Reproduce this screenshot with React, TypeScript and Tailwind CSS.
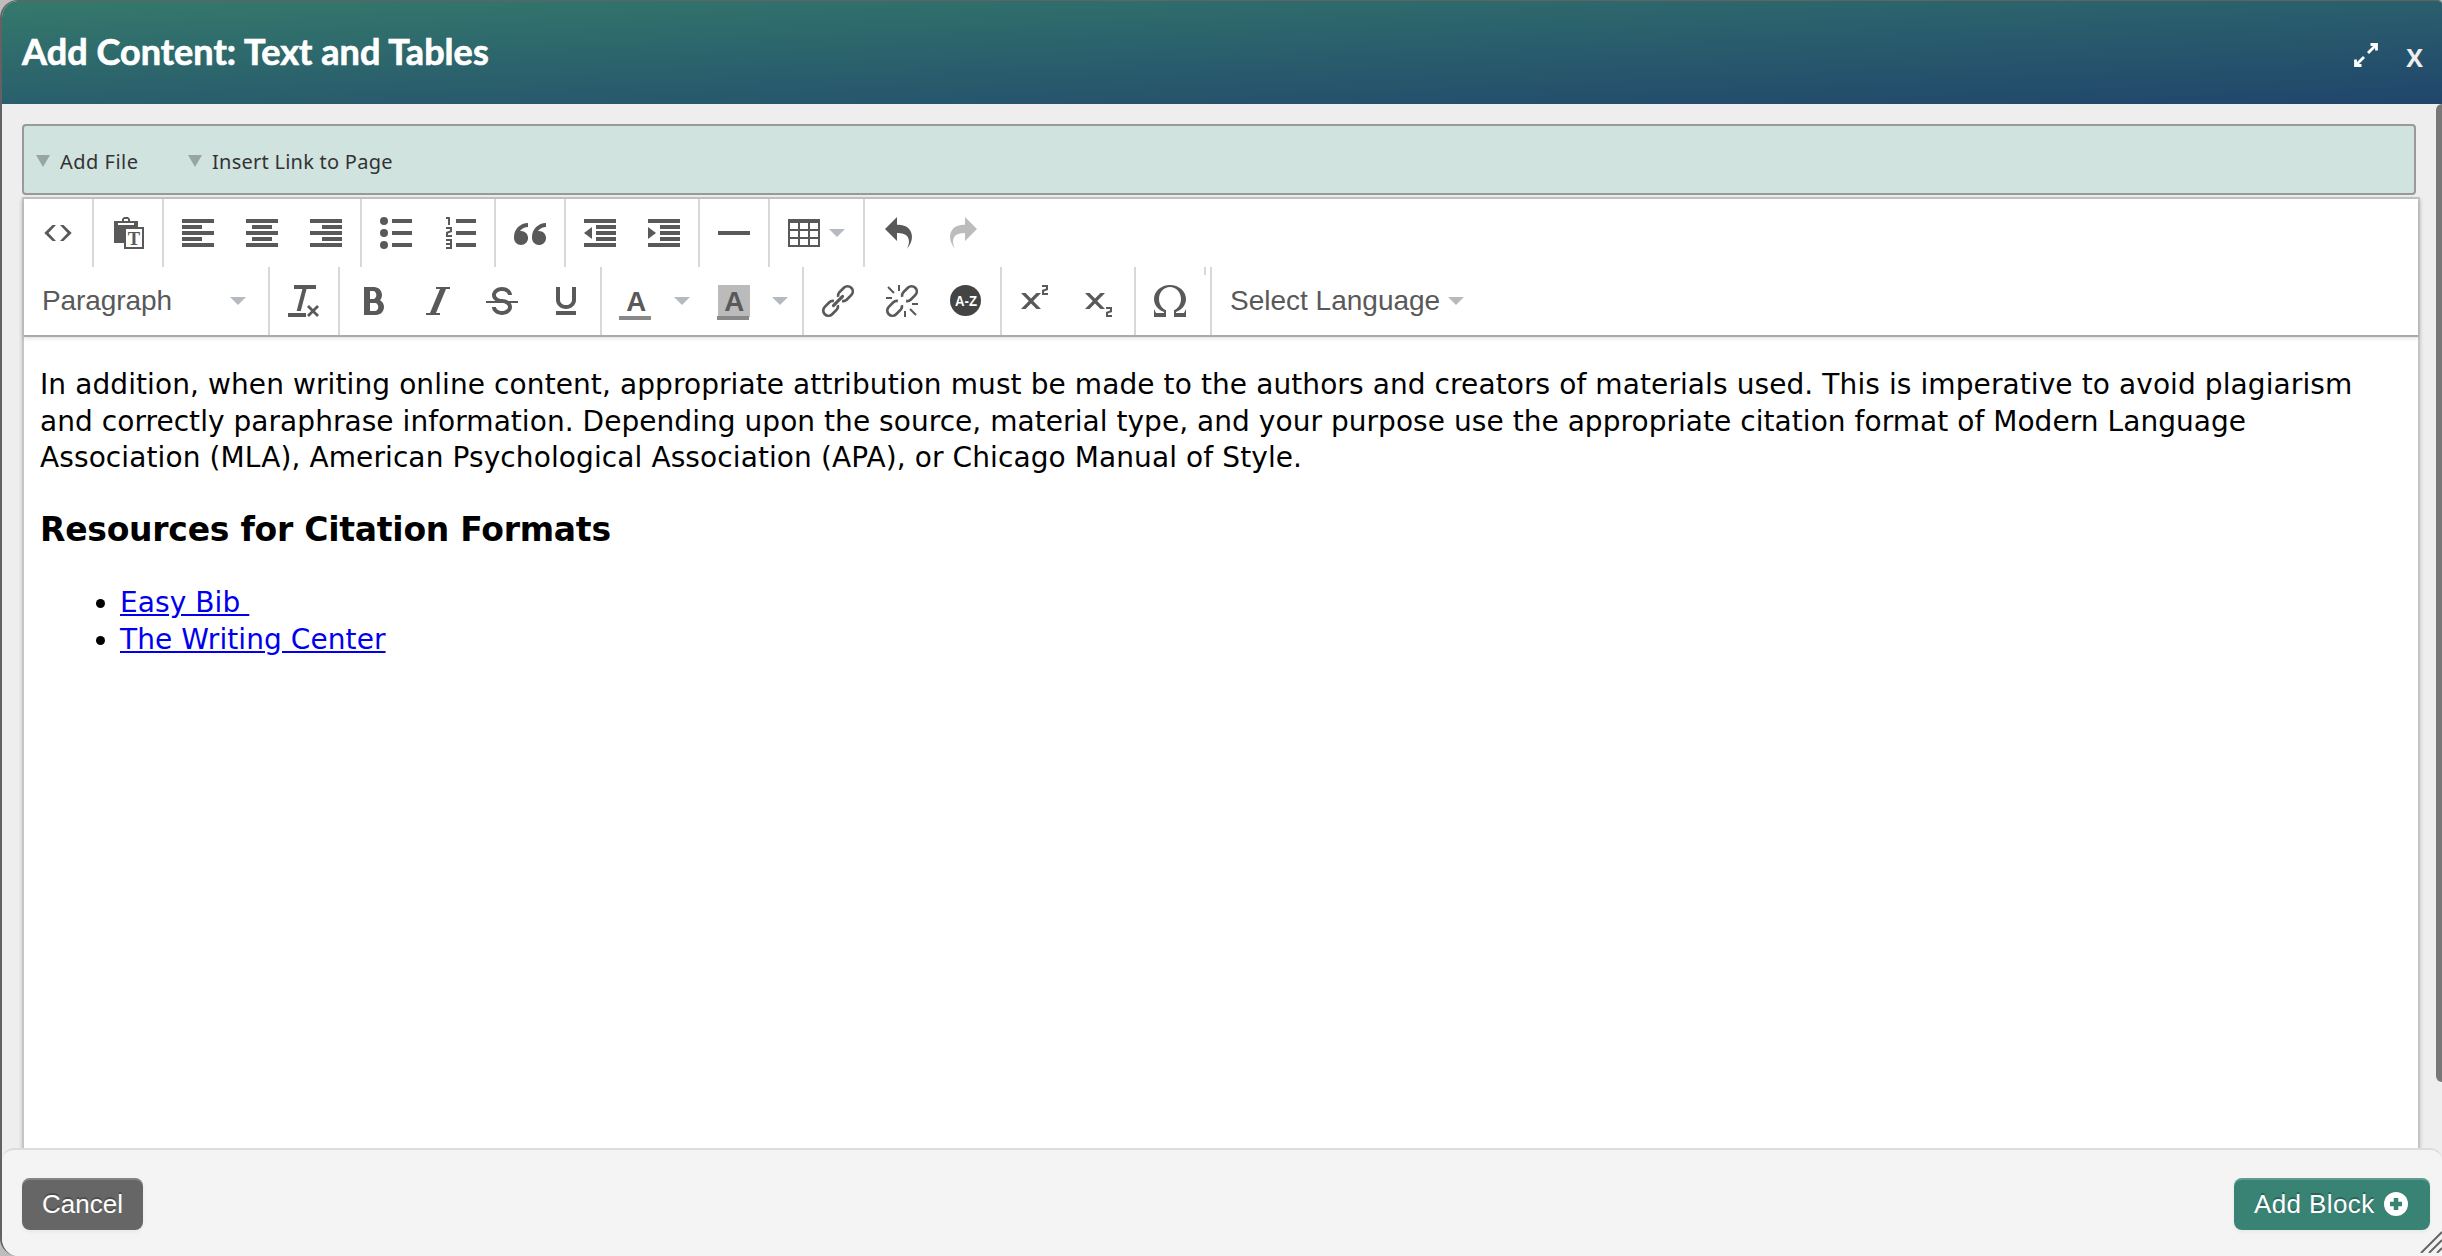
import React from 'react';
import {
  ImBold,
  ImClearFormatting,
  ImItalic,
  ImOmega,
  ImQuotesLeft,
  ImRedo2,
  ImStrikethrough,
  ImUnderline,
  ImUndo2,
} from 'react-icons/im';

interface ChildrenProps {
  children: React.ReactNode;
}

// 32px icon on the toolbar grid
function Icon({ children }: ChildrenProps) {
  return (
    <svg width="32" height="32" viewBox="0 0 32 32" fill="currentColor" className="block overflow-visible">
      {children}
    </svg>
  );
}

function Button({ children }: ChildrenProps) {
  return <button className="flex h-16 w-16 shrink-0 items-center justify-center">{children}</button>;
}

function Group({ children, className = '' }: ChildrenProps & { className?: string }) {
  return (
    <div className={`flex h-[68px] shrink-0 items-center border-r-2 border-[#d8d8d8] px-0.5 ${className}`}>
      {children}
    </div>
  );
}

function Caret() {
  return (
    <svg width="16" height="8" viewBox="0 0 16 8" className="block shrink-0">
      <path d="M0 0h16L8 8z" fill="#b5babf" />
    </svg>
  );
}

const LONG_ROWS = 'M0 2h32v4H0zM0 14h32v4H0zM0 26h32v4H0z';
const LIST_ROWS = 'M12 2h20v4H12zM12 14h20v4H12zM12 26h20v4H12z';
const INDENT_ROWS = 'M0 2h32v4H0zM12 8h20v4H12zM12 14h20v4H12zM12 20h20v4H12zM0 26h32v4H0z';
const DIAGONAL_CROSS = 'M1 8h4.500L11 13.600 16.500 8H21l-7.800 8L21 24h-4.500L11 18.400 5.500 24H1l7.800-8z';
const SMALL_TWO = 'h6v5l-4 1.500v1.500h4v2h-6v-5l4-1.500v-1.500h-4z';

function ChainHalves() {
  return (
    <>
      <path d="M19 13.200A5 5 0 0 1 23 10.800h6.500a5.200 5.200 0 0 1 0 10.400H23a5 5 0 0 1-4-2.400" />
      <path d="M13 13.200A5 5 0 0 0 9 10.800H2.500a5.200 5.200 0 0 0 0 10.400H9a5 5 0 0 0 4-2.400" />
    </>
  );
}

function FirstRow() {
  return (
    <div className="flex h-[68px]">
      <Group>
        <Button>
          <Icon>
            <path d="M10.500 8H14l-7.500 8 7.500 8h-3.500l-8.200-8zM21.500 8H18l7.500 8-7.500 8h3.500l8.200-8z" />
          </Icon>
        </Button>
      </Group>
      <Group>
        <Button>
          <Icon>
            <path d="M2 4h8V2l2-2h4l2 2v2h8v6H12v16H2zM12 2v2h4V2zM6 6v2h16V6z" fillRule="evenodd" />
            <path d="M12 10h20v22H12zM14 12v18h16V12z" fillRule="evenodd" />
            <text
              x="22"
              y="28"
              textAnchor="middle"
              fontSize="18.500"
              fontWeight="bold"
              fontFamily="'Liberation Serif', serif"
            >
              T
            </text>
          </Icon>
        </Button>
      </Group>
      <Group>
        <Button>
          <Icon>
            <path d={LONG_ROWS} />
            <path d="M0 8h20v4H0zM0 20h20v4H0z" />
          </Icon>
        </Button>
        <Button>
          <Icon>
            <path d={LONG_ROWS} />
            <path d="M6 8h20v4H6zM6 20h20v4H6z" />
          </Icon>
        </Button>
        <Button>
          <Icon>
            <path d={LONG_ROWS} />
            <path d="M12 8h20v4H12zM12 20h20v4H12z" />
          </Icon>
        </Button>
      </Group>
      <Group>
        <Button>
          <Icon>
            <circle cx="4" cy="4" r="4" />
            <circle cx="4" cy="16" r="4" />
            <circle cx="4" cy="28" r="4" />
            <path d={LIST_ROWS} />
          </Icon>
        </Button>
        <Button>
          <Icon>
            <path d="M2 0h4v8H4V2H2z" />
            <path d={'M2 10' + SMALL_TWO} />
            <path d="M2 22h6v10H2v-2h4v-2H2v-2h4v-2H2z" />
            <path d={LIST_ROWS} />
          </Icon>
        </Button>
      </Group>
      <Group>
        <Button>
          <ImQuotesLeft size={32} />
        </Button>
      </Group>
      <Group>
        <Button>
          <Icon>
            <path d={INDENT_ROWS} />
            <path d="M8 10v12l-8-6z" />
          </Icon>
        </Button>
        <Button>
          <Icon>
            <path d={INDENT_ROWS} />
            <path d="M0 10v12l8-6z" />
          </Icon>
        </Button>
      </Group>
      <Group>
        <Button>
          <Icon>
            <path d="M0 14h32v4H0z" />
          </Icon>
        </Button>
      </Group>
      <Group className="w-[95px]">
        <button className="flex items-center gap-[9px] pl-4">
          <Icon>
            <path
              fillRule="evenodd"
              d="M0 2h32v28H0zM2 6v6h8V6zM12 6v6h8V6zM22 6v6h8V6zM2 14v6h8v-6zM12 14v6h8v-6zM22 14v6h8v-6zM2 22v6h8v-6zM12 22v6h8v-6zM22 22v6h8v-6z"
            />
          </Icon>
          <Caret />
        </button>
      </Group>
      <div className="flex items-center px-0.5">
        <Button>
          <ImUndo2 size={32} />
        </Button>
        <Button>
          <ImRedo2 size={32} color="#bcbcbc" />
        </Button>
      </div>
    </div>
  );
}

function SecondRow() {
  return (
    <div className="flex h-[68px]">
      <Group className="w-[246px]">
        <button className="flex w-full items-center justify-between pl-4 pr-5">
          <span className="text-[28px] tracking-[-0.1px]">Paragraph</span>
          <Caret />
        </button>
      </Group>
      <Group>
        <Button>
          <ImClearFormatting size={32} />
        </Button>
      </Group>
      <Group>
        <Button>
          <ImBold size={32} />
        </Button>
        <Button>
          <ImItalic size={32} />
        </Button>
        <Button>
          <ImStrikethrough size={32} />
        </Button>
        <Button>
          <ImUnderline size={32} />
        </Button>
      </Group>
      <Group>
        <button className="flex w-[98px] items-center gap-[22px] pl-4">
          <Icon>
            <text
              x="16.300"
              y="26"
              textAnchor="middle"
              fontSize="28"
              fontWeight="bold"
              textLength="20"
              lengthAdjust="spacingAndGlyphs"
            >
              A
            </text>
            <path d="M-1 31h32v4H-1z" fill="#888" />
          </Icon>
          <Caret />
        </button>
        <button className="flex w-[98px] items-center gap-[22px] pl-4">
          <Icon>
            <path d="M0 0h32v32H0z" fill="#bbb" />
            <text
              x="16.300"
              y="26"
              textAnchor="middle"
              fontSize="28"
              fontWeight="bold"
              textLength="20"
              lengthAdjust="spacingAndGlyphs"
            >
              A
            </text>
            <path d="M-1 31h32v4H-1z" fill="#888" />
          </Icon>
          <Caret />
        </button>
      </Group>
      <Group>
        <Button>
          <Icon>
            <g transform="rotate(-45 16 16)" fill="none" stroke="currentColor" strokeWidth="2.700">
              <ChainHalves />
              <path d="M9.500 16h13" strokeWidth="3" strokeLinecap="round" />
            </g>
          </Icon>
        </Button>
        <Button>
          <Icon>
            <g transform="rotate(-45 16 16)" fill="none" stroke="currentColor" strokeWidth="2.700">
              <ChainHalves />
            </g>
            <path
              d="M13 0v6M2 2l6 6M0 13h6M19 32v-6M30 30l-6-6M32 19h-6"
              fill="none"
              stroke="currentColor"
              strokeWidth="2"
            />
          </Icon>
        </Button>
        <Button>
          <Icon>
            <circle cx="15.500" cy="15.500" r="15.500" fill="#444" />
            <text
              x="5"
              y="21"
              fontSize="15"
              fontWeight="bold"
              fill="#fff"
              textLength="22"
              lengthAdjust="spacingAndGlyphs"
            >
              A-Z
            </text>
          </Icon>
        </Button>
      </Group>
      <Group>
        <Button>
          <Icon>
            <path d={DIAGONAL_CROSS} />
            <path d={'M22 0' + SMALL_TWO} />
          </Icon>
        </Button>
        <Button>
          <Icon>
            <path d={DIAGONAL_CROSS} />
            <path d={'M22 22' + SMALL_TWO} />
          </Icon>
        </Button>
      </Group>
      <div className="flex items-center px-0.5">
        <Button>
          <ImOmega size={32} />
        </Button>
      </div>
      {/* empty group, only the stub of its border shows */}
      <div className="h-2 w-0.5 bg-[#d8d8d8]" />
      <div className="w-1.5 border-r-2 border-[#d8d8d8]" />
      <button className="flex items-center gap-2 pl-[18px]">
        <span className="text-[28px]">Select Language</span>
        <Caret />
      </button>
    </div>
  );
}

function DropdownLink({ label, className }: { label: string; className: string }) {
  return (
    <a className={`flex items-center ${className}`}>
      <svg width="14" height="12" viewBox="0 0 14 12" className="mr-[10px] mt-[-3px]">
        <path d="M0 0h14L7 12z" fill="#99a5a1" />
      </svg>
      {label}
    </a>
  );
}

export default function App() {
  return (
    <div className="h-[1256px] w-[2442px] overflow-hidden bg-[#bdbdbd] font-['Liberation_Sans',Arial,sans-serif]">
      <div className="relative flex h-full flex-col overflow-hidden rounded-l-[18px] rounded-tr-[4px] border-l-2 border-t border-[#626262] bg-[#eee]">
        <header className="flex h-[103px] shrink-0 items-center bg-linear-to-br from-[#35796b] to-[#21456b] pl-5 pr-[19px]">
          <h1 className="mb-1 font-['Lato',sans-serif] text-[36px] font-bold leading-none tracking-[0.05px] text-white [-webkit-text-stroke:0.7px_white]">
            Add Content: Text and Tables
          </h1>
          <svg
            width="24"
            height="24"
            viewBox="0 0 24 24"
            fill="none"
            stroke="#fff"
            strokeWidth="2.800"
            className="ml-auto mt-[5px]"
          >
            <path d="M14 10l8-8M16.500 1.500h6v6M10 14l-8 8M1.500 16.500v6h6" />
          </svg>
          <span className="ml-7 mt-[10px] font-['Open_Sans',sans-serif] text-[25px] font-bold leading-none text-[#eee]">
            X
          </span>
        </header>

        <div className="flex min-h-0 flex-1 flex-col pl-5 pr-[22px] pt-5">
          <nav className="mr-1 flex h-[71px] shrink-0 items-center rounded-[4px] border-2 border-[#999] bg-[#d0e3df] pl-3 pt-[5px] font-['Noto_Sans',sans-serif] text-[20px] text-[#333]">
            <DropdownLink label="Add File" className="w-[152px] tracking-[0.5px]" />
            <DropdownLink label="Insert Link to Page" className="tracking-[0.25px]" />
          </nav>

          <main className="mt-0.5 flex min-h-0 flex-1 flex-col border-x-2 border-t-2 border-[#c5c5c5] bg-white shadow-[0_2px_4px_rgba(0,0,0,0.2)]">
            <div className="z-10 h-[138px] shrink-0 border-b-2 border-[#aaa] text-[#595959] shadow-[0_1px_4px_rgba(0,0,0,0.15)]">
              <FirstRow />
              <SecondRow />
            </div>
            <article className="pl-4 pt-[30px] font-['DejaVu_Sans',Verdana,sans-serif] text-[28px] leading-[36.500px] text-black">
              <p className="whitespace-nowrap">
                <span className="tracking-[0.093px]">
                  In addition, when writing online content, appropriate attribution must be made to the authors and
                  creators of materials used. This is imperative to avoid plagiarism
                </span>
                <br />
                <span className="tracking-[0.047px]">
                  and correctly paraphrase information. Depending upon the source, material type, and your purpose
                  use the appropriate citation format of Modern Language
                </span>
                <br />
                <span className="tracking-[0.1px]">
                  Association (MLA), American Psychological Association (APA), or Chicago Manual of Style.
                </span>
              </p>
              <h2 className="mt-[33px] text-[33px] font-bold leading-10 tracking-[-0.25px]">
                Resources for Citation Formats
              </h2>
              <ul className="mt-[34px] list-disc pl-20 leading-[37px] tracking-[0.080px]">
                <li>
                  <a className="text-[#0000ee] underline">Easy Bib&nbsp;</a>
                </li>
                <li>
                  <a className="text-[#0000ee] underline">The Writing Center</a>
                </li>
              </ul>
            </article>
          </main>
        </div>

        <footer className="z-20 flex h-[108px] shrink-0 items-start justify-between rounded-t-[12px] border-t-2 border-[#dcdcdc] bg-[#f4f4f4] pl-5 pr-3 pt-7 text-[26px] text-white">
          <button className="h-[52px] w-[121px] rounded-lg bg-[#666] shadow-[inset_0_2px_0_rgba(255,255,255,0.2),0_2px_4px_rgba(0,0,0,0.05)] [text-shadow:0_-2px_0_rgba(0,0,0,0.25)]">
            Cancel
          </button>
          <button className="flex h-[52px] w-[196px] items-center rounded-lg bg-[#398374] pl-5 tracking-[0.4px] shadow-[inset_0_2px_0_rgba(255,255,255,0.2),0_2px_4px_rgba(0,0,0,0.05)] [text-shadow:0_-2px_0_rgba(0,0,0,0.25)]">
            Add Block
            <svg width="24" height="24" viewBox="0 0 24 24" className="ml-[9px]">
              <circle cx="12" cy="12" r="12" fill="#fff" />
              <path d="M12 6v12M6 12h12" stroke="#398374" strokeWidth="4.500" />
            </svg>
          </button>
        </footer>

        {/* scrollbar thumb */}
        <div className="absolute right-0 top-[103px] h-[978px] w-1.5 rounded-l-[6px] bg-[#777]" />
        {/* resize grip */}
        <svg width="22" height="22" viewBox="0 0 22 22" className="absolute bottom-[3px] right-0 z-30">
          <path d="M1 22L22 1M9 22L22 9M17 22l5-5" stroke="#666" strokeWidth="2" />
        </svg>
      </div>
    </div>
  );
}
